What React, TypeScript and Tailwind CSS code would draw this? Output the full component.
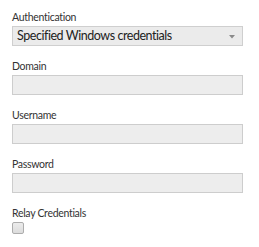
export default function App() {
  const fields = ["Domain", "Username", "Password"];

  return (
    <div className="w-[259px] h-[247px] bg-white pl-[12px] pt-[10px] font-['Lato',sans-serif] text-[#333]">
      <div className="mb-[13px]">
        <label className="block text-[10.5px] tracking-[-0.3px] leading-[14px] mb-[2px]">Authentication</label>
        <div className="relative flex items-center w-[231px] h-[20px] bg-[#ebebeb] border border-[#cfcfcf] pl-[4px] text-[12.5px] tracking-[-0.45px] text-[#222]">
          <span>Specified Windows credentials</span>
          <svg className="absolute right-[7px] top-[8px]" width="6" height="4" viewBox="0 0 6 4">
            <path d="M0 0 L6 0 L3 3.5 Z" fill="#8a8a8a" />
          </svg>
        </div>
      </div>

      {fields.map((f) => (
        <div key={f} className="mb-[13px]">
          <label className="block text-[10.5px] tracking-[-0.3px] leading-[14px] mb-[2px]">{f}</label>
          <input
            type={f === "Password" ? "password" : "text"}
            className="block w-[231px] h-[20px] bg-[#ededed] border border-[#cdcdcd] outline-none"
          />
        </div>
      ))}

      <div>
        <label className="block text-[10.5px] tracking-[-0.3px] leading-[14px] mb-[2px]">Relay Credentials</label>
        <div className="w-[12px] h-[12px] rounded-[2px] border border-[#adadad] bg-gradient-to-b from-[#ececec] to-[#dcdcdc]" />
      </div>
    </div>
  );
}
